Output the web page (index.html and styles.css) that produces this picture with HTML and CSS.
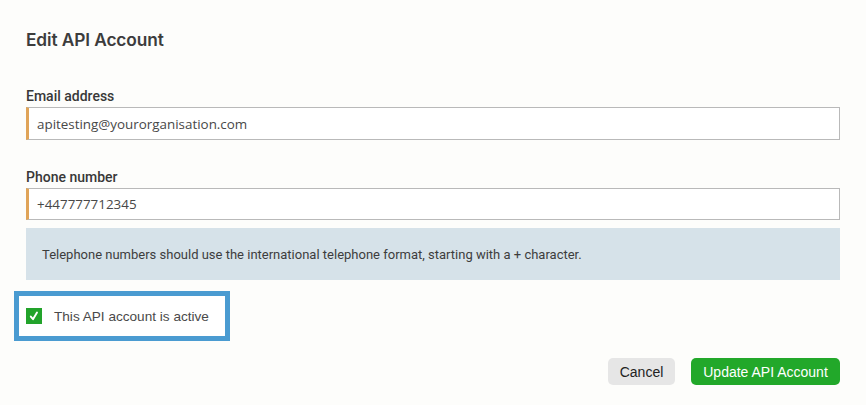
FILE: index.html
```html
<!DOCTYPE html>
<html lang="en">
<head>
<meta charset="utf-8">
<title>Edit API Account</title>
<link rel="stylesheet" href="styles.css">
</head>
<body>
<main class="panel">
  <h1 class="title">Edit API Account</h1>

  <div class="field field-email">
    <label class="label" for="email">Email address</label>
    <input class="input" id="email" type="text" value="apitesting@yourorganisation.com">
  </div>

  <div class="field field-phone">
    <label class="label" for="phone">Phone number</label>
    <input class="input" id="phone" type="text" value="+447777712345">
  </div>

  <div class="hint">Telephone numbers should use the international telephone format, starting with a + character.</div>

  <div class="check-row">
    <span class="check-box">
      <svg viewBox="0 0 16 16" width="16" height="16" aria-hidden="true">
        <path d="M4.8 8.6 L7 11.2 L11 4.6" fill="none" stroke="#fff" stroke-width="1.9" stroke-linecap="round" stroke-linejoin="round"/>
      </svg>
    </span>
    <span class="check-text">This API account is active</span>
  </div>

  <div class="actions">
    <button class="btn btn-cancel" type="button">Cancel</button>
    <button class="btn btn-primary" type="button">Update API Account</button>
  </div>
</main>
</body>
</html>
```

FILE: styles.css
```css
html, body {
  margin: 0;
  padding: 0;
  background: #fdfdfb;
}

.panel {
  padding: 28px 26px 0 26px;
  display: flex;
  flex-direction: column;
}

.title {
  margin: 0;
  font-family: "Inter", "Liberation Sans", sans-serif;
  font-weight: 600;
  font-size: 17.3px;
  line-height: 24px;
  color: #3c3c3c;
  letter-spacing: -0.1px;
}

.field {
  display: flex;
  flex-direction: column;
}

.field-email {
  margin-top: 35px;
}

.field-phone {
  margin-top: 28px;
}

.label {
  font-family: "Roboto", "Liberation Sans", sans-serif;
  font-weight: 500;
  font-size: 14px;
  line-height: 18px;
  color: #383838;
  margin-bottom: 2px;
}

.input {
  box-sizing: border-box;
  height: 33px;
  margin: 0;
  padding: 0 0 0 8px;
  border: 1px solid #b9b9b9;
  border-left: 3px solid #e0a458;
  border-radius: 0;
  background: #fff;
  font-family: "Open Sans", "Liberation Sans", sans-serif;
  font-size: 13.4px;
  color: #484848;
  outline: none;
}

.field-phone .input {
  height: 32px;
}

.hint {
  margin-top: 8px;
  height: 52px;
  box-sizing: border-box;
  padding: 0 16px;
  display: flex;
  align-items: center;
  background: #d6e2e9;
  font-family: "Roboto", "Liberation Sans", sans-serif;
  font-size: 13px;
  color: #3d3d3d;
}

.check-row {
  align-self: flex-start;
  margin: 11px 0 0 -12px;
  box-sizing: border-box;
  height: 50px;
  padding: 0 16px 0 7px;
  border: 5px solid #4a9bd1;
  background: #fff;
  display: flex;
  align-items: center;
  gap: 12px;
}

.check-box {
  width: 16px;
  height: 16px;
  background: #22a32b;
  display: flex;
  align-items: center;
  justify-content: center;
}

.check-box svg {
  display: block;
}

.check-text {
  font-family: "Liberation Sans", "Inter", sans-serif;
  font-size: 13.6px;
  color: #4a4a4a;
}

.actions {
  margin-top: 17px;
  display: flex;
  justify-content: flex-end;
  gap: 16px;
}

.btn {
  height: 27px;
  border: 0;
  border-radius: 5px;
  padding: 0;
  white-space: nowrap;
  font-family: "Liberation Sans", "Inter", sans-serif;
  font-size: 14px;
  cursor: pointer;
}

.btn-cancel {
  width: 67px;
  background: #e6e6e6;
  color: #222;
}

.btn-primary {
  width: 149px;
  background: #22a82a;
  color: #fff;
}
```
